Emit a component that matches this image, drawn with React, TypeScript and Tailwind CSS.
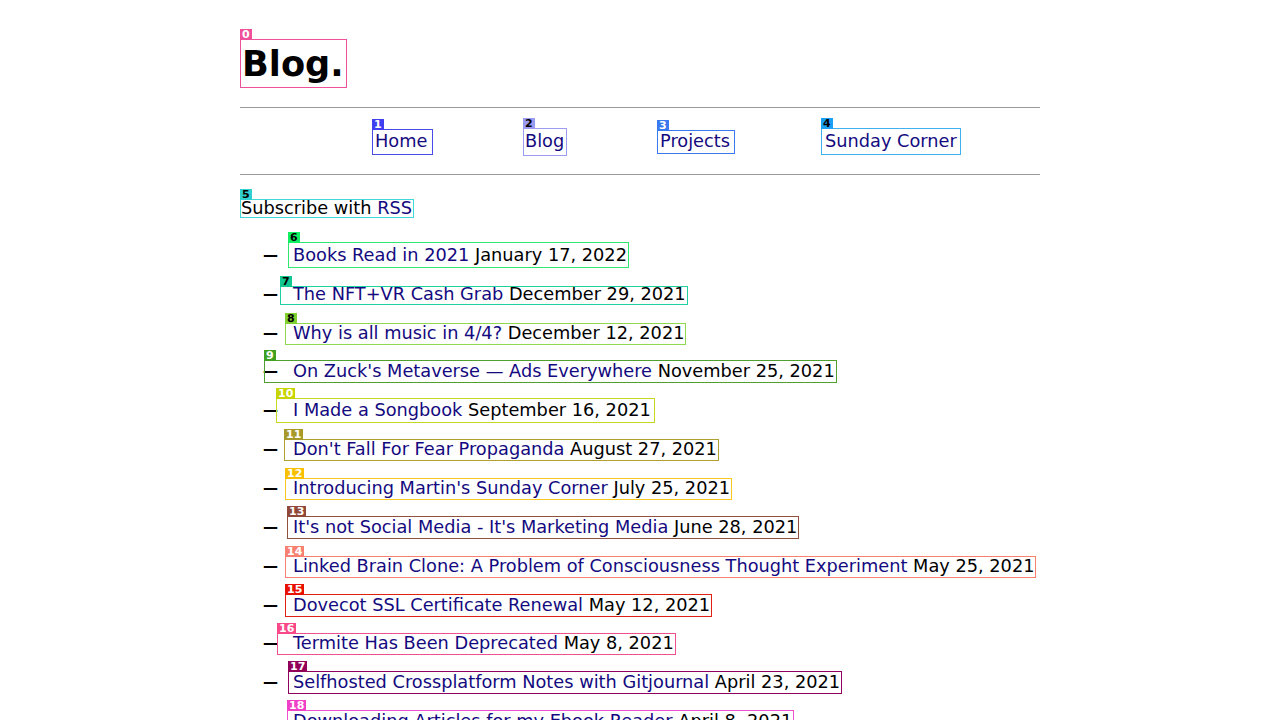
import React from 'react'

// Annotated blog index page

type Post = {
  n: number
  title: string
  date: string
  border: string
  tag: string
  box: string
}

const posts: Post[] = [
  { n: 6, title: 'Books Read in 2021', date: 'January 17, 2022', border: 'border-[#30e870]', tag: 'bg-[#10f060] text-black', box: 'left-[-5px] top-[-3px] bottom-[-2px] right-[-2px]' },
  { n: 7, title: 'The NFT+VR Cash Grab', date: 'December 29, 2021', border: 'border-[#20d0a0]', tag: 'bg-[#10c890] text-black', box: 'left-[-13px] top-[2px] bottom-[0px] right-[-2px]' },
  { n: 8, title: 'Why is all music in 4/4?', date: 'December 12, 2021', border: 'border-[#90d850]', tag: 'bg-[#80d030] text-black', box: 'left-[-8px] top-[0px] bottom-[-1px] right-[-2px]' },
  { n: 9, title: "On Zuck's Metaverse — Ads Everywhere", date: 'November 25, 2021', border: 'border-[#50a030]', tag: 'bg-[#40a020] text-white', box: 'left-[-29px] top-[-1px] bottom-[-1px] right-[-2px]' },
  { n: 10, title: 'I Made a Songbook', date: 'September 16, 2021', border: 'border-[#c8d820]', tag: 'bg-[#c8d400] text-white', box: 'left-[-17px] top-[-2px] bottom-[-2px] right-[-4px]' },
  { n: 11, title: "Don't Fall For Fear Propaganda", date: 'August 27, 2021', border: 'border-[#b0a030]', tag: 'bg-[#a89a28] text-white', box: 'left-[-9px] top-[0px] bottom-[-1px] right-[-2px]' },
  { n: 12, title: "Introducing Martin's Sunday Corner", date: 'July 25, 2021', border: 'border-[#f8c820]', tag: 'bg-[#f8c000] text-white', box: 'left-[-8px] top-[0px] bottom-[-1px] right-[-2px]' },
  { n: 13, title: "It's not Social Media - It's Marketing Media", date: 'June 28, 2021', border: 'border-[#905040]', tag: 'bg-[#904838] text-white', box: 'left-[-6px] top-[-1px] bottom-[-1px] right-[-2px]' },
  { n: 14, title: 'Linked Brain Clone: A Problem of Consciousness Thought Experiment', date: 'May 25, 2021', border: 'border-[#f88070]', tag: 'bg-[#f88070] text-white', box: 'left-[-8px] top-[0px] bottom-[-1px] right-[-2px]' },
  { n: 15, title: 'Dovecot SSL Certificate Renewal', date: 'May 12, 2021', border: 'border-[#e02010]', tag: 'bg-[#e81000] text-white', box: 'left-[-8px] top-[-1px] bottom-[-1px] right-[-2px]' },
  { n: 16, title: 'Termite Has Been Deprecated', date: 'May 8, 2021', border: 'border-[#f05090]', tag: 'bg-[#f84888] text-white', box: 'left-[-16px] top-[0px] bottom-[-1px] right-[-2px]' },
  { n: 17, title: 'Selfhosted Crossplatform Notes with Gitjournal', date: 'April 23, 2021', border: 'border-[#900060]', tag: 'bg-[#900058] text-white', box: 'left-[-5px] top-[-1px] bottom-[-1px] right-[-2px]' },
  { n: 18, title: 'Downloading Articles for my Ebook Reader', date: 'April 8, 2021', border: 'border-[#f050d0]', tag: 'bg-[#f040c8] text-white', box: 'left-[-6px] top-[-1px] bottom-[-1px] right-[-2px]' },
]

function Tag({ n, className }: { n: number; className: string }) {
  return (
    <span
      className={`absolute bottom-full left-[-1px] h-[11px] px-[2px] text-[11px] font-bold leading-[11px] ${className}`}
    >
      {n}
    </span>
  )
}

const linkColor = 'text-[#140a80]'

export default function App() {
  return (
    <div className="min-h-screen bg-white font-['DejaVu_Sans',sans-serif] text-[17.75px] text-black">
      <div className="mx-auto w-[800px] pt-[39px]">
        {/* Title */}
        <div className="flex">
          <h1 className="relative border border-[#f0509a] pl-px pr-[2px] text-[35.2px] font-bold leading-[47px]">
            <Tag n={0} className="bg-[#f0509a] text-white" />
            Blog.
          </h1>
        </div>

        <div className="mt-[19px] border-t border-[#9a9a9a]" />

        {/* Nav */}
        <nav className={`flex h-[66px] items-center pl-[132px] pt-px ${linkColor}`}>
          <a className="relative flex h-[26px] w-[61px] items-center border border-[#4a4ae8] pl-[2px]">
            <Tag n={1} className="bg-[#4040f0] text-white" />
            Home
          </a>
          <a className="relative ml-[90px] flex h-[28px] w-[44px] items-center border border-[#9c9cf0] pl-px">
            <Tag n={2} className="bg-[#9a9af0] text-black" />
            Blog
          </a>
          <a className="relative ml-[90px] flex h-[24px] w-[78px] items-center border border-[#3a7af0] pl-[2px]">
            <Tag n={3} className="bg-[#3a7af0] text-white" />
            Projects
          </a>
          <a className="relative ml-[86px] flex h-[27px] w-[140px] items-center border border-[#40b0f0] pl-[3px]">
            <Tag n={4} className="bg-[#1aa0f5] text-black" />
            Sunday Corner
          </a>
        </nav>

        <div className="border-t border-[#9a9a9a]" />

        {/* RSS */}
        <div className="mt-[24px] flex">
          <p className="relative h-[19px] whitespace-pre border border-[#40d8d8] pr-[1px] leading-[17px]">
            <Tag n={5} className="bg-[#30d0d0] text-black" />
            Subscribe with <span className={linkColor}>RSS</span>
          </p>
        </div>

        {/* Posts */}
        <ul className="mt-[18px]">
          {posts.map((p) => (
            <li key={p.n} className="flex h-[38.85px] items-center">
              <span className="ml-[23px] w-[30px] shrink-0 text-[15px] font-bold leading-[21px]">—</span>
              <span className="relative whitespace-nowrap leading-[21px]">
                <span className={`absolute border ${p.border} ${p.box}`}>
                  <Tag n={p.n} className={p.tag} />
                </span>
                <a className={linkColor}>{p.title}</a> {p.date}
              </span>
            </li>
          ))}
        </ul>
      </div>
    </div>
  )
}
